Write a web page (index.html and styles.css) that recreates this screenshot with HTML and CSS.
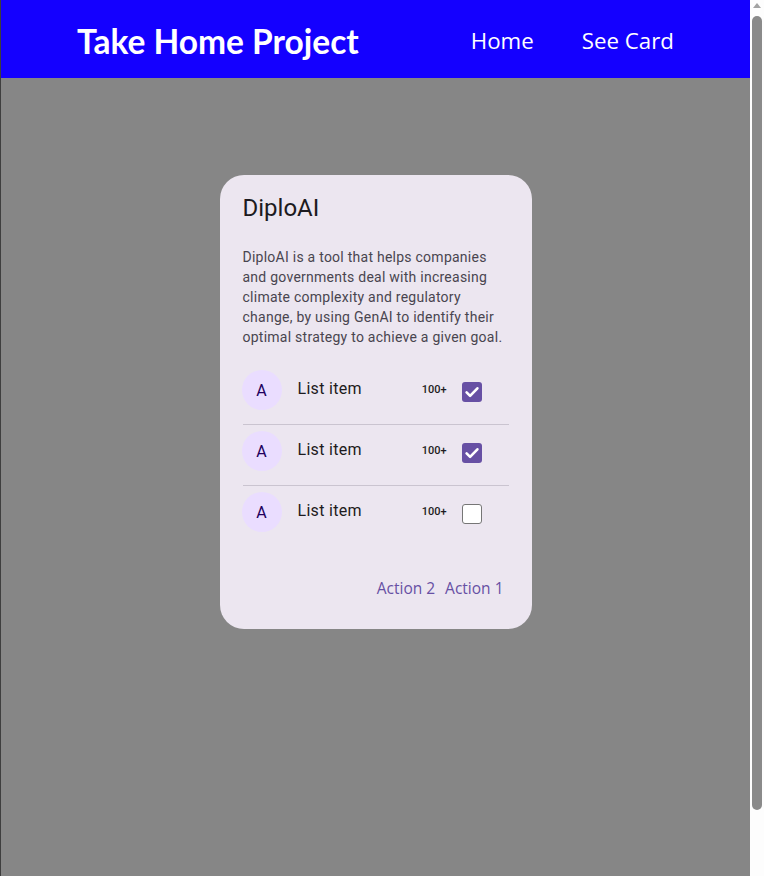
FILE: index.html
```html
<!DOCTYPE html>
<html lang="en">
<head>
<meta charset="utf-8">
<title>Take Home Project</title>
<link rel="stylesheet" href="styles.css">
</head>
<body>
<header class="topbar">
  <h1 class="brand">Take Home Project</h1>
  <nav class="nav">
    <a class="nav-link" href="#">Home</a>
    <a class="nav-link" href="#">See Card</a>
  </nav>
</header>
<main class="main">
  <section class="card">
    <h2 class="card-title">DiploAI</h2>
    <p class="card-text">DiploAI is a tool that helps companies and governments deal with increasing climate complexity and regulatory change, by using GenAI to identify their optimal strategy to achieve a given goal.</p>
    <ul class="list">
      <li class="item">
        <span class="avatar">A</span>
        <span class="item-label">List item</span>
        <span class="item-count">100+</span>
        <span class="check checked"><svg viewBox="0 0 20 20" width="20" height="20"><path d="M4.6 10.4l3.5 3.5 7.3-7.6" fill="none" stroke="#fff" stroke-width="2.6" stroke-linecap="round" stroke-linejoin="round"/></svg></span>
      </li>
      <li class="item">
        <span class="avatar">A</span>
        <span class="item-label">List item</span>
        <span class="item-count">100+</span>
        <span class="check checked"><svg viewBox="0 0 20 20" width="20" height="20"><path d="M4.6 10.4l3.5 3.5 7.3-7.6" fill="none" stroke="#fff" stroke-width="2.6" stroke-linecap="round" stroke-linejoin="round"/></svg></span>
      </li>
      <li class="item">
        <span class="avatar">A</span>
        <span class="item-label">List item</span>
        <span class="item-count">100+</span>
        <span class="check"></span>
      </li>
    </ul>
    <div class="actions">
      <button class="action" type="button">Action 2</button>
      <button class="action" type="button">Action 1</button>
    </div>
  </section>
</main>
<div class="scrollbar" aria-hidden="true">
  <span class="scroll-arrow"></span>
  <span class="scroll-thumb"></span>
</div>
</body>
</html>
```
FILE: styles.css
```css
html {
  margin: 0;
  padding: 0;
  background: #fdfdfd;
  overflow: hidden;
}
body {
  margin: 0 14px 0 0;
  padding: 0;
  background: #868686;
  border-left: 1px solid #3e3e3e;
  height: 876px;
  box-sizing: border-box;
  font-family: Roboto, "Liberation Sans", sans-serif;
}
.topbar {
  background: #1400ff;
  height: 78px;
  padding: 0 76px;
  display: flex;
  align-items: center;
  justify-content: space-between;
  box-sizing: border-box;
}
.brand {
  margin: 0;
  color: #fff;
  font-family: Lato, "Open Sans", sans-serif;
  font-weight: 700;
  font-size: 33.5px;
  line-height: 40px;
  padding-top: 3px;
}
.nav {
  display: flex;
  gap: 48px;
  padding-top: 3px;
}
.nav-link {
  color: #fff;
  text-decoration: none;
  font-family: "Open Sans", sans-serif;
  font-size: 22.3px;
  line-height: 30px;
}
.main {
  display: flex;
  justify-content: center;
  padding-top: 97px;
}
.card {
  width: 312px;
  box-sizing: border-box;
  background: #ece6f0;
  border-radius: 24px;
  padding: 17px 23px 21px 23px;
}
.card-title {
  margin: 0;
  font-size: 24px;
  line-height: 32px;
  font-weight: 400;
  color: #1d1b20;
}
.card-text {
  margin: 23px 0 0;
  font-size: 14px;
  line-height: 20px;
  letter-spacing: 0.25px;
  color: #49454f;
}
.list {
  list-style: none;
  margin: 17px 0 0;
  padding: 0;
}
.item {
  height: 60px;
  display: flex;
  align-items: flex-start;
  border-bottom: 1px solid #cac4d0;
}
.item:last-child {
  border-bottom: none;
}
.avatar {
  width: 40px;
  height: 40px;
  margin-top: 6px;
  margin-left: -1px;
  border-radius: 50%;
  background: #eaddff;
  color: #21005d;
  font-size: 16px;
  display: flex;
  align-items: center;
  justify-content: center;
}
.item-label {
  margin-left: 16px;
  margin-top: 13px;
  font-size: 16px;
  line-height: 24px;
  letter-spacing: 0.3px;
  color: #1d1b20;
  flex: 1;
}
.item-count {
  margin-top: 20px;
  font-size: 11px;
  line-height: 12px;
  font-weight: 500;
  color: #1d1b20;
}
.check {
  width: 20px;
  height: 20px;
  margin-top: 18px;
  margin-left: 15px;
  margin-right: 27px;
  box-sizing: border-box;
  border: 1.5px solid #767676;
  border-radius: 3px;
  background: #fff;
  display: flex;
  align-items: center;
  justify-content: center;
}
.check.checked {
  background: #6750a4;
  border: none;
}
.check svg {
  display: block;
}
.actions {
  margin-top: 22px;
  display: flex;
  justify-content: flex-end;
}
.action {
  height: 40px;
  padding: 0 5px;
  background: transparent;
  border: none;
  color: #6750a4;
  font-family: "Open Sans", sans-serif;
  font-size: 15.5px;
  cursor: pointer;
}
.scrollbar {
  position: fixed;
  top: 0;
  right: 0;
  width: 14px;
  height: 876px;
  background: #fdfdfd;
}
.scroll-arrow {
  position: absolute;
  top: 3px;
  left: 3px;
  width: 0;
  height: 0;
  border-left: 4px solid transparent;
  border-right: 4px solid transparent;
  border-bottom: 5px solid #a3a3a3;
}
.scroll-thumb {
  position: absolute;
  top: 16px;
  left: 2px;
  width: 10px;
  height: 794px;
  border-radius: 5px;
  background: #8a8a8a;
}
```
